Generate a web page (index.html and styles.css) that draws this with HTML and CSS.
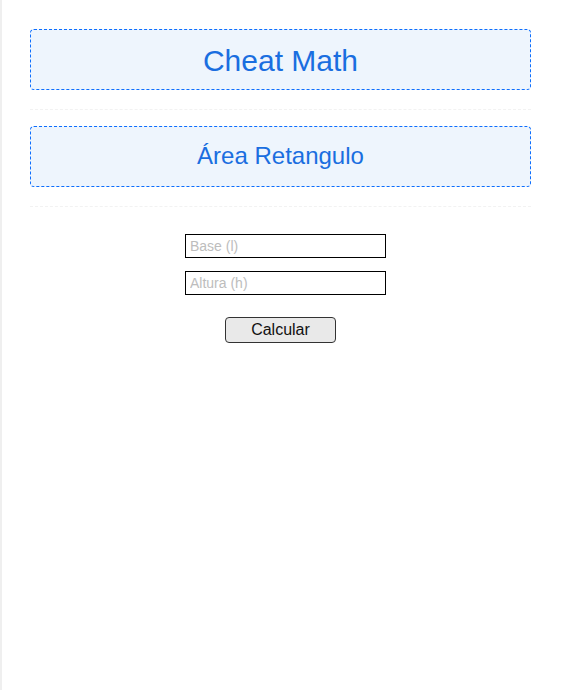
FILE: index.html
```html
<!DOCTYPE html>
<html lang="pt">
<head>
<meta charset="utf-8">
<title>Cheat Math</title>
<link rel="stylesheet" href="styles.css">
</head>
<body>
<main class="page">
  <header class="box box-title"><h1>Cheat Math</h1></header>
  <div class="divider"></div>
  <section class="box box-sub"><h2>Área Retangulo</h2></section>
  <div class="divider"></div>
  <form class="calc">
    <input class="field" type="text" placeholder="Base (l)">
    <input class="field" type="text" placeholder="Altura (h)">
    <button class="btn" type="button">Calcular</button>
  </form>
</main>
</body>
</html>
```
FILE: styles.css
```css
html, body {
  margin: 0;
  padding: 0;
  height: 100%;
  background: #fff;
}
body {
  border-left: 2px solid #efefef;
  box-sizing: border-box;
  font-family: "Liberation Sans", Arial, sans-serif;
}
.page {
  padding: 29px 35px 0 28px;
}
.box {
  height: 61px;
  box-sizing: border-box;
  border: 1px dashed #0d6efd;
  border-radius: 4px;
  background: #eef5fd;
  display: flex;
  align-items: center;
  justify-content: center;
  color: #1a6ee0;
}
.box h1, .box h2 {
  margin: 0;
  font-weight: normal;
}
.box h1 {
  font-size: 30px;
  padding-top: 3px;
}
.box h2 {
  font-size: 24px;
  padding-bottom: 2px;
}
.divider {
  border-top: 1px dashed #f2f2f2;
  margin: 19px 0 16px;
}
.calc {
  display: flex;
  flex-direction: column;
  align-items: center;
  padding-top: 11px;
}
.field {
  width: 201px;
  height: 24px;
  box-sizing: border-box;
  border: 1px solid #000;
  margin: 0 0 13px 10px;
  padding: 0 4px;
  font-family: "Liberation Sans", Arial, sans-serif;
  font-size: 14px;
  outline: none;
}
.field::placeholder {
  color: #bdbdbd;
}
.btn {
  margin-top: 9px;
  width: 111px;
  height: 26px;
  border: 1px solid #333;
  border-radius: 4px;
  background: #e9e9e9;
  font-family: "Liberation Sans", Arial, sans-serif;
  font-size: 16px;
  color: #111;
}
```
